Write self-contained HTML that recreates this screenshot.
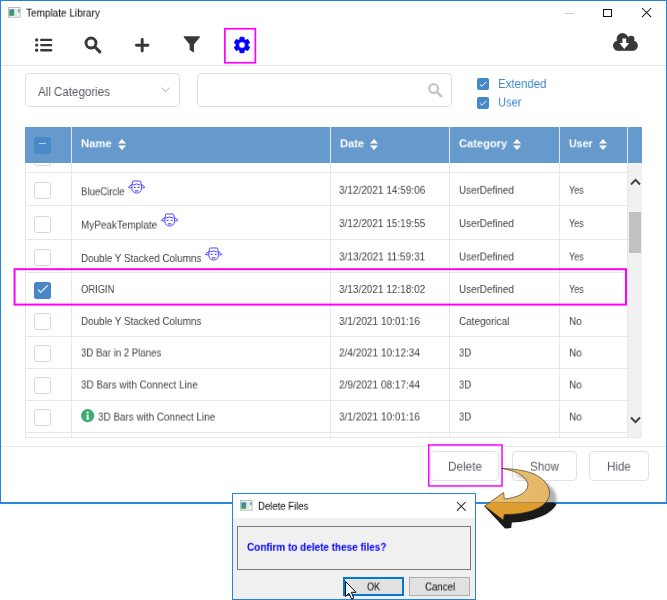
<!DOCTYPE html>
<html>
<head>
<meta charset="utf-8">
<title>Template Library</title>
<style>
html,body{margin:0;padding:0;}
body{width:667px;height:600px;background:#fff;position:relative;overflow:hidden;font-family:"Liberation Sans",sans-serif;color:#333;}
.abs{position:absolute;}
.t{position:absolute;white-space:nowrap;line-height:1;transform-origin:0 0;will-change:transform;}
.box{position:absolute;border:1px solid #dcdfe6;border-radius:4px;background:#fff;box-sizing:border-box;}
.cb{position:absolute;width:17px;height:17px;border:1px solid #d4d7de;border-radius:2.5px;background:#fff;box-sizing:border-box;}
svg{position:absolute;overflow:visible;}
</style>
</head>
<body>

<div class="abs" style="left:0;top:0;width:665px;height:501px;border:1px solid #2485d8;border-bottom:2px solid #2c89d9;background:#fff"></div>
<svg style="left:7.8px;top:7.1px" width="12.4" height="10.6" viewBox="0 0 12.4 10.6">
<defs><linearGradient id="ig1" x1="0" y1="0" x2="0.3" y2="1"><stop offset="0" stop-color="#4b85cc"/><stop offset="0.45" stop-color="#3a8f8c"/><stop offset="1" stop-color="#3fa45c"/></linearGradient></defs>
<rect x="0.5" y="0.5" width="11.6" height="9.7" fill="#fafafa" stroke="#bcbcbc" stroke-width="1"/>
<rect x="1.3" y="2.2" width="5" height="6.7" fill="url(#ig1)"/>
<rect x="6.7" y="2.2" width="2.5" height="6.7" fill="#e3e3e3"/>
<rect x="10" y="2.2" width="1.6" height="1.8" fill="#5b8fd4"/><rect x="10" y="4" width="1.6" height="1.700" fill="#77c477"/>
</svg>
<div class="t" style="left:26.1px;top:7px;font-size:10.6px;color:#000;font-weight:normal;transform:translateY(0.6px) scaleX(0.9431);">Template Library</div>
<div class="abs" style="left:565px;top:12.6px;width:8.8px;height:1px;background:#cdcdcd"></div>
<div class="abs" style="left:603.3px;top:8.6px;width:6.6px;height:6.6px;border:1px solid #111"></div>
<svg style="left:642px;top:8.3px" width="9.2" height="9.2" viewBox="0 0 10 10"><path d="M0 0L10 10M10 0L0 10" stroke="#111" stroke-width="1.1" fill="none"/></svg>
<svg style="left:34.5px;top:38px" width="18" height="14" viewBox="0 0 18 14">
<g fill="#383838"><circle cx="1.65" cy="1.9" r="1.65"/><circle cx="1.65" cy="7.1" r="1.65"/><circle cx="1.65" cy="12.2" r="1.65"/>
<rect x="5.1" y="0.7" width="12.2" height="2.4" rx="1.2"/><rect x="5.1" y="5.9" width="12.2" height="2.4" rx="1.2"/><rect x="5.1" y="11" width="12.2" height="2.4" rx="1.2"/></g></svg>
<svg style="left:84px;top:36px" width="18" height="18" viewBox="0 0 18 18">
<circle cx="7" cy="7" r="5" fill="none" stroke="#383838" stroke-width="2.9"/><path d="M11 11L15.8 15.8" stroke="#383838" stroke-width="3.1" stroke-linecap="round"/></svg>
<svg style="left:134.9px;top:38.4px" width="14.4" height="14.4" viewBox="0 0 16 16">
<path d="M8 1.6V14.4M1.600 8H14.4" stroke="#383838" stroke-width="3.2" stroke-linecap="round"/></svg>
<svg style="left:182.8px;top:36.3px" width="17.6" height="17.2" viewBox="0 0 18 17.2">
<path d="M1.2 0H16.8Q17.8 0 17.2 1.2L11.2 8.6V17L6.800 13.800V8.600L0.800 1.200Q0.2 0 1.2 0Z" fill="#383838"/></svg>
<svg style="left:241.6px;top:44.9px" width="1" height="1" viewBox="0 0 1 1">
<path d="M2.34 -5.52L2.03 -7.84L-2.03 -7.84L-2.34 -5.52L-3.61 -4.79L-5.78 -5.68L-7.81 -2.16L-5.96 -0.73L-5.96 0.73L-7.81 2.16L-5.78 5.68L-3.61 4.79L-2.34 5.52L-2.03 7.84L2.03 7.84L2.34 5.52L3.61 4.79L5.78 5.68L7.81 2.16L5.96 0.73L5.96 -0.73L7.81 -2.16L5.78 -5.68L3.61 -4.79ZM3.25 0A3.25 3.25 0 1 0 -3.25 0A3.25 3.25 0 1 0 3.25 0Z" fill="#0000ff" fill-rule="evenodd" stroke="#0000ff" stroke-width="0.7" stroke-linejoin="round"/></svg>
<svg style="left:613.1px;top:33px" width="24.9" height="17.8" viewBox="0 0 24.9 17.8">
<g fill="#383838"><circle cx="9.5" cy="5.9" r="5.9"/><circle cx="18.1" cy="6.1" r="3.4"/><circle cx="5.2" cy="12.6" r="5.2"/><circle cx="19.7" cy="12.6" r="5.2"/><rect x="5.2" y="7" width="14.5" height="10.8"/></g>
<path fill="#fff" d="M9.4 5.5H13.2V10H16.3L11.3 15.9L6.4 10H9.4Z"/></svg>
<div class="abs" style="left:1px;top:65px;width:665px;height:1px;background:#e6e6e6"></div>
<div class="box" style="left:24.9px;top:73px;width:154.8px;height:33.6px"></div>
<div class="t" style="left:38.3px;top:86px;font-size:12.7px;color:#5a5c60;font-weight:normal;transform:translateY(0px) scaleX(0.9107);">All Categories</div>
<svg style="left:160.7px;top:87.2px" width="9" height="6" viewBox="0 0 9 6"><path d="M0.5 0.7L4.5 4.9L8.5 0.7" stroke="#c0c4cc" stroke-width="1.1" fill="none"/></svg>
<div class="box" style="left:197px;top:73px;width:255px;height:33.6px"></div>
<svg style="left:426.5px;top:82.3px" width="16" height="16" viewBox="0 0 16 16">
<circle cx="6.6" cy="6.6" r="4.4" fill="none" stroke="#c3c6cc" stroke-width="2.3"/><path d="M10 10L14.2 14.2" stroke="#c3c6cc" stroke-width="2.7" stroke-linecap="round"/></svg>
<div class="abs" style="left:477.3px;top:78px;width:12px;height:12px;background:#4587c9;border-radius:2px"></div>
<svg style="left:477.3px;top:78px" width="12" height="12" viewBox="0 0 12 12"><path d="M2.8 6.2L5 8.3L9.3 3.8" stroke="#fff" stroke-width="1" fill="none"/></svg>
<div class="abs" style="left:477.3px;top:96.5px;width:12px;height:12px;background:#4587c9;border-radius:2px"></div>
<svg style="left:477.3px;top:96.5px" width="12" height="12" viewBox="0 0 12 12"><path d="M2.8 6.2L5 8.3L9.3 3.8" stroke="#fff" stroke-width="1" fill="none"/></svg>
<div class="t" style="left:498px;top:78px;font-size:12.7px;color:#3f87c9;font-weight:normal;transform:translateY(0px) scaleX(0.9038);">Extended</div>
<div class="t" style="left:498px;top:96px;font-size:12.7px;color:#3f87c9;font-weight:normal;transform:translateY(0.5px) scaleX(0.8764);">User</div>
<div class="abs" style="left:25px;top:127px;width:617px;height:36px;background:#6699cc"></div>
<div class="abs" style="left:71px;top:127px;width:1px;height:36px;background:#dfe9f4"></div>
<div class="abs" style="left:330px;top:127px;width:1px;height:36px;background:#dfe9f4"></div>
<div class="abs" style="left:449px;top:127px;width:1px;height:36px;background:#dfe9f4"></div>
<div class="abs" style="left:559px;top:127px;width:1px;height:36px;background:#dfe9f4"></div>
<div class="abs" style="left:627px;top:127px;width:1px;height:36px;background:#dfe9f4"></div>
<div class="abs" style="left:34px;top:137px;width:17px;height:17px;background:#4a88c7;border-radius:2.5px"></div>
<div class="abs" style="left:39px;top:142.5px;width:7px;height:1.6px;background:#b4cfea"></div>
<div class="t" style="left:81px;top:138px;font-size:11.5px;color:#fff;font-weight:bold;transform:translateY(0.3px) scaleX(0.975);">Name</div>
<svg style="left:117.8px;top:139px" width="8" height="11" viewBox="0 0 8 11"><path d="M4 0L8 4.6H0Z M4 11L8 6.4H0Z" fill="#fff"/></svg>
<div class="t" style="left:340px;top:138px;font-size:11.5px;color:#fff;font-weight:bold;transform:translateY(0.3px) scaleX(0.965);">Date</div>
<svg style="left:369.8px;top:139px" width="8" height="11" viewBox="0 0 8 11"><path d="M4 0L8 4.6H0Z M4 11L8 6.4H0Z" fill="#fff"/></svg>
<div class="t" style="left:458.5px;top:138px;font-size:11.5px;color:#fff;font-weight:bold;transform:translateY(0.3px) scaleX(0.965);">Category</div>
<svg style="left:512.7px;top:139px" width="8" height="11" viewBox="0 0 8 11"><path d="M4 0L8 4.6H0Z M4 11L8 6.4H0Z" fill="#fff"/></svg>
<div class="t" style="left:569px;top:138px;font-size:11.5px;color:#fff;font-weight:bold;transform:translateY(0.3px) scaleX(0.92);">User</div>
<svg style="left:598.5px;top:139px" width="8" height="11" viewBox="0 0 8 11"><path d="M4 0L8 4.6H0Z M4 11L8 6.4H0Z" fill="#fff"/></svg>
<div class="abs" style="left:25px;top:163px;width:1px;height:274px;background:#e7e7e7"></div>
<div class="abs" style="left:71px;top:163px;width:1px;height:274px;background:#e7e7e7"></div>
<div class="abs" style="left:330px;top:163px;width:1px;height:274px;background:#e7e7e7"></div>
<div class="abs" style="left:449px;top:163px;width:1px;height:274px;background:#e7e7e7"></div>
<div class="abs" style="left:559px;top:163px;width:1px;height:274px;background:#e7e7e7"></div>
<div class="abs" style="left:627px;top:163px;width:1px;height:274px;background:#e7e7e7"></div>
<div class="abs" style="left:25px;top:172px;width:603px;height:1px;background:#e7e7e7"></div>
<div class="abs" style="left:25px;top:205.3px;width:603px;height:1px;background:#e7e7e7"></div>
<div class="abs" style="left:25px;top:238.7px;width:603px;height:1px;background:#e7e7e7"></div>
<div class="abs" style="left:25px;top:272px;width:603px;height:1px;background:#e7e7e7"></div>
<div class="abs" style="left:25px;top:304px;width:603px;height:1px;background:#e7e7e7"></div>
<div class="abs" style="left:25px;top:336px;width:603px;height:1px;background:#e7e7e7"></div>
<div class="abs" style="left:25px;top:368px;width:603px;height:1px;background:#e7e7e7"></div>
<div class="abs" style="left:25px;top:400px;width:603px;height:1px;background:#e7e7e7"></div>
<div class="abs" style="left:25px;top:432px;width:603px;height:1px;background:#e7e7e7"></div>
<div class="abs" style="left:25px;top:437px;width:617px;height:1px;background:#e7e7e7"></div>
<div class="abs" style="left:34px;top:163px;width:17px;height:3px;border:1px solid #d4d7de;border-top:none;border-radius:0 0 2.5px 2.5px;box-sizing:border-box"></div>
<div class="abs" style="left:628px;top:163px;width:14px;height:274px;background:#f1f1f1"></div>
<div class="abs" style="left:629.2px;top:212.3px;width:12.3px;height:41px;background:#c1c1c1"></div>
<svg style="left:630px;top:178px" width="11" height="8" viewBox="0 0 11 8"><path d="M1 6.5L5.5 1.8L10 6.5" stroke="#3e3e3e" stroke-width="1.9" fill="none"/></svg>
<svg style="left:630px;top:415.6px" width="11" height="8" viewBox="0 0 11 8"><path d="M1 1.5L5.5 6.2L10 1.5" stroke="#3e3e3e" stroke-width="1.9" fill="none"/></svg>
<div class="t" style="left:80.9px;top:186px;font-size:11.2px;color:#404040;font-weight:normal;transform:translateY(0.3px) scaleX(0.8542);">BlueCircle</div>
<div class="t" style="left:339.4px;top:184px;font-size:11.2px;color:#404040;font-weight:normal;transform:translateY(0.8px) scaleX(0.894);">3/12/2021 14:59:06</div>
<div class="t" style="left:458.5px;top:184px;font-size:11.2px;color:#404040;font-weight:normal;transform:translateY(0.8px) scaleX(0.8819);">UserDefined</div>
<div class="t" style="left:568.8px;top:184px;font-size:11.2px;color:#404040;font-weight:normal;transform:translateY(0.8px) scaleX(0.7991);">Yes</div>
<div class="cb" style="left:34px;top:182px"></div>
<svg style="left:127.6px;top:179.5px" width="17" height="15" viewBox="0 0 17 15" fill="none" stroke="#4a4aff" stroke-width="1" stroke-linecap="round" stroke-linejoin="round">
<path d="M4 4.7L4.6 1.6Q4.7 1 5.3 1H12Q12.6 1 12.7 1.6L13.3 4.7"/>
<path d="M5.2 4.9Q8.65 2.8 12.1 4.9"/>
<path d="M4 4.6Q1 5.6 0.6 7.6Q1.7 8.3 3.7 7.7"/>
<path d="M13.3 4.6Q16.3 5.6 16.7 7.6Q15.6 8.3 13.6 7.7"/>
<path d="M3.9 5V8.6Q4 12.6 8.65 13.1Q13.3 12.6 13.4 8.6V5"/>
<path d="M6.2 7.3h1M10.1 7.3h1M7.3 10.9h2.7" stroke-width="1.2"/>
</svg>
<div class="t" style="left:80.9px;top:219px;font-size:11.2px;color:#404040;font-weight:normal;transform:translateY(0.6px) scaleX(0.8882);">MyPeakTemplate</div>
<div class="t" style="left:339.4px;top:218px;font-size:11.2px;color:#404040;font-weight:normal;transform:translateY(0.1px) scaleX(0.894);">3/12/2021 15:19:55</div>
<div class="t" style="left:458.5px;top:218px;font-size:11.2px;color:#404040;font-weight:normal;transform:translateY(0.1px) scaleX(0.8819);">UserDefined</div>
<div class="t" style="left:568.8px;top:218px;font-size:11.2px;color:#404040;font-weight:normal;transform:translateY(0.1px) scaleX(0.7991);">Yes</div>
<div class="cb" style="left:34px;top:215.5px"></div>
<svg style="left:160.8px;top:212.8px" width="17" height="15" viewBox="0 0 17 15" fill="none" stroke="#4a4aff" stroke-width="1" stroke-linecap="round" stroke-linejoin="round">
<path d="M4 4.7L4.6 1.6Q4.7 1 5.3 1H12Q12.6 1 12.7 1.6L13.3 4.7"/>
<path d="M5.2 4.9Q8.65 2.8 12.1 4.9"/>
<path d="M4 4.6Q1 5.6 0.6 7.6Q1.7 8.3 3.7 7.7"/>
<path d="M13.3 4.6Q16.3 5.6 16.7 7.6Q15.6 8.3 13.6 7.7"/>
<path d="M3.9 5V8.6Q4 12.6 8.65 13.1Q13.3 12.6 13.4 8.6V5"/>
<path d="M6.2 7.3h1M10.1 7.3h1M7.3 10.9h2.7" stroke-width="1.2"/>
</svg>
<div class="t" style="left:80.9px;top:253px;font-size:11.2px;color:#404040;font-weight:normal;transform:translateY(0px) scaleX(0.8824);">Double Y Stacked Columns</div>
<div class="t" style="left:339.4px;top:251px;font-size:11.2px;color:#404040;font-weight:normal;transform:translateY(0.4px) scaleX(0.9017);">3/13/2021 11:59:31</div>
<div class="t" style="left:458.5px;top:251px;font-size:11.2px;color:#404040;font-weight:normal;transform:translateY(0.4px) scaleX(0.8819);">UserDefined</div>
<div class="t" style="left:568.8px;top:251px;font-size:11.2px;color:#404040;font-weight:normal;transform:translateY(0.4px) scaleX(0.7991);">Yes</div>
<div class="cb" style="left:34px;top:249px"></div>
<svg style="left:205.1px;top:246.5px" width="17" height="15" viewBox="0 0 17 15" fill="none" stroke="#4a4aff" stroke-width="1" stroke-linecap="round" stroke-linejoin="round">
<path d="M4 4.7L4.6 1.6Q4.7 1 5.3 1H12Q12.6 1 12.7 1.6L13.3 4.7"/>
<path d="M5.2 4.9Q8.65 2.8 12.1 4.9"/>
<path d="M4 4.6Q1 5.6 0.6 7.6Q1.7 8.3 3.7 7.7"/>
<path d="M13.3 4.6Q16.3 5.6 16.7 7.6Q15.6 8.3 13.6 7.7"/>
<path d="M3.9 5V8.6Q4 12.6 8.65 13.1Q13.3 12.6 13.4 8.6V5"/>
<path d="M6.2 7.3h1M10.1 7.3h1M7.3 10.9h2.7" stroke-width="1.2"/>
</svg>
<div class="t" style="left:80.9px;top:283px;font-size:11.2px;color:#404040;font-weight:normal;transform:translateY(0.9px) scaleX(0.8362);">ORIGIN</div>
<div class="t" style="left:339.4px;top:283px;font-size:11.2px;color:#404040;font-weight:normal;transform:translateY(0.9px) scaleX(0.894);">3/13/2021 12:18:02</div>
<div class="t" style="left:458.5px;top:283px;font-size:11.2px;color:#404040;font-weight:normal;transform:translateY(0.9px) scaleX(0.8819);">UserDefined</div>
<div class="t" style="left:568.8px;top:283px;font-size:11.2px;color:#404040;font-weight:normal;transform:translateY(0.9px) scaleX(0.7991);">Yes</div>
<div class="abs" style="left:34px;top:282px;width:17px;height:17px;background:#4a86c5;border-radius:2.5px"></div>
<svg style="left:34px;top:282px" width="17" height="17" viewBox="0 0 17 17"><path d="M4 7.700L6.600 10.500L13.600 3.500" stroke="#fff" stroke-opacity="0.92" stroke-width="1.15" fill="none"/></svg>
<div class="t" style="left:80.9px;top:315px;font-size:11.2px;color:#404040;font-weight:normal;transform:translateY(0.9px) scaleX(0.8824);">Double Y Stacked Columns</div>
<div class="t" style="left:339.4px;top:315px;font-size:11.2px;color:#404040;font-weight:normal;transform:translateY(0.9px) scaleX(0.897);">3/1/2021 10:01:16</div>
<div class="t" style="left:458.5px;top:315px;font-size:11.2px;color:#404040;font-weight:normal;transform:translateY(0.9px) scaleX(0.8897);">Categorical</div>
<div class="t" style="left:568.8px;top:315px;font-size:11.2px;color:#404040;font-weight:normal;transform:translateY(0.9px) scaleX(0.894);">No</div>
<div class="cb" style="left:34px;top:313px"></div>
<div class="t" style="left:80.9px;top:347px;font-size:11.2px;color:#404040;font-weight:normal;transform:translateY(0.5px) scaleX(0.8599);">3D Bar in 2 Planes</div>
<div class="t" style="left:339.4px;top:347px;font-size:11.2px;color:#404040;font-weight:normal;transform:translateY(0.5px) scaleX(0.897);">2/4/2021 10:12:34</div>
<div class="t" style="left:458.5px;top:347px;font-size:11.2px;color:#404040;font-weight:normal;transform:translateY(0.5px) scaleX(0.8521);">3D</div>
<div class="t" style="left:568.8px;top:347px;font-size:11.2px;color:#404040;font-weight:normal;transform:translateY(0.5px) scaleX(0.894);">No</div>
<div class="cb" style="left:34px;top:345px"></div>
<div class="t" style="left:80.9px;top:379px;font-size:11.2px;color:#404040;font-weight:normal;transform:translateY(0.5px) scaleX(0.8816);">3D Bars with Connect Line</div>
<div class="t" style="left:339.4px;top:379px;font-size:11.2px;color:#404040;font-weight:normal;transform:translateY(0.5px) scaleX(0.897);">2/9/2021 08:17:44</div>
<div class="t" style="left:458.5px;top:379px;font-size:11.2px;color:#404040;font-weight:normal;transform:translateY(0.5px) scaleX(0.8521);">3D</div>
<div class="t" style="left:568.8px;top:379px;font-size:11.2px;color:#404040;font-weight:normal;transform:translateY(0.5px) scaleX(0.894);">No</div>
<div class="cb" style="left:34px;top:377px"></div>
<div class="t" style="left:98.1px;top:411px;font-size:11.2px;color:#404040;font-weight:normal;transform:translateY(0.6px) scaleX(0.8846);">3D Bars with Connect Line</div>
<div class="t" style="left:339.4px;top:411px;font-size:11.2px;color:#404040;font-weight:normal;transform:translateY(0.5px) scaleX(0.897);">3/1/2021 10:01:16</div>
<div class="t" style="left:458.5px;top:411px;font-size:11.2px;color:#404040;font-weight:normal;transform:translateY(0.5px) scaleX(0.8521);">3D</div>
<div class="t" style="left:568.8px;top:411px;font-size:11.2px;color:#404040;font-weight:normal;transform:translateY(0.5px) scaleX(0.894);">No</div>
<div class="cb" style="left:34px;top:408.5px"></div>
<svg style="left:80.8px;top:408.9px" width="13.3" height="13.3" viewBox="0 0 13 13"><circle cx="6.5" cy="6.5" r="6.5" fill="#3eab72"/>
<circle cx="6.5" cy="3.6" r="1.05" fill="#fff"/><path d="M5.2 5.700H7.400V9.300H8.100V10.300H5V9.300H5.700V6.700H5.200Z" fill="#fff"/></svg>
<div class="abs" style="left:1px;top:445.5px;width:665px;height:1px;background:#ebebeb"></div>
<div class="box" style="left:429.5px;top:451px;width:69.5px;height:30.3px;border-color:#dfe2e8"></div>
<div class="t" style="left:447.5px;top:461px;font-size:11.9px;color:#5a5c60;font-weight:normal;transform:translateY(0.7px) scaleX(0.9855);">Delete</div>
<div class="box" style="left:512.2px;top:451px;width:64.5px;height:30.3px;border-color:#dfe2e8"></div>
<div class="t" style="left:529.8px;top:461px;font-size:11.9px;color:#5a5c60;font-weight:normal;transform:translateY(0.7px) scaleX(0.9709);">Show</div>
<div class="box" style="left:589.3px;top:451px;width:59.7px;height:30.3px;border-color:#dfe2e8"></div>
<div class="t" style="left:607.2px;top:461px;font-size:11.9px;color:#5a5c60;font-weight:normal;transform:translateY(0.7px) scaleX(0.9725);">Hide</div>
<div class="abs" style="left:232px;top:493px;width:241.5px;height:104.8px;border:1.2px solid #2485d8;background:#f0f0f0"></div>
<div class="abs" style="left:233.2px;top:494.2px;width:241.5px;height:24px;background:#fff"></div>
<svg style="left:240.2px;top:499.8px" width="12.4" height="10.6" viewBox="0 0 12.4 10.6">
<defs><linearGradient id="ig2" x1="0" y1="0" x2="0.3" y2="1"><stop offset="0" stop-color="#4b85cc"/><stop offset="0.45" stop-color="#3a8f8c"/><stop offset="1" stop-color="#3fa45c"/></linearGradient></defs>
<rect x="0.5" y="0.5" width="11.6" height="9.7" fill="#fafafa" stroke="#bcbcbc" stroke-width="1"/>
<rect x="1.3" y="2.2" width="5" height="6.7" fill="url(#ig2)"/>
<rect x="6.7" y="2.2" width="2.5" height="6.7" fill="#e3e3e3"/>
<rect x="10" y="2.2" width="1.6" height="1.8" fill="#5b8fd4"/><rect x="10" y="4" width="1.6" height="1.700" fill="#77c477"/>
</svg>
<div class="t" style="left:258px;top:500px;font-size:10.6px;color:#000;font-weight:normal;transform:translateY(0.8px) scaleX(0.8988);">Delete Files</div>
<svg style="left:457.2px;top:501.6px" width="8.6" height="8.6" viewBox="0 0 9 9"><path d="M0 0L9 9M9 0L0 9" stroke="#222" stroke-width="1.1" fill="none"/></svg>
<div class="abs" style="left:237px;top:526px;width:233.5px;height:43.5px;border:1px solid #7a7a7a;box-sizing:border-box"></div>
<div class="t" style="left:246.8px;top:541px;font-size:10.8px;color:#0000ff;font-weight:bold;transform:translateY(0.8px) scaleX(0.9225);">Confirm to delete these files?</div>
<div class="abs" style="left:343.2px;top:577.2px;width:60.4px;height:19.3px;border:2px solid #0078d7;background:#e1e1e1;box-sizing:border-box"></div>
<div class="abs" style="left:409.2px;top:577.2px;width:60.8px;height:19.3px;border:1px solid #adadad;background:#e1e1e1;box-sizing:border-box"></div>
<div class="t" style="left:367px;top:581px;font-size:10.8px;color:#000;font-weight:normal;transform:translateY(0.5px) scaleX(0.8331);">OK</div>
<div class="t" style="left:424.5px;top:581px;font-size:10.8px;color:#000;font-weight:normal;transform:translateY(0.5px) scaleX(0.8953);">Cancel</div>
<svg style="left:345px;top:581px" width="12" height="19" viewBox="0 0 12 19"><path d="M0.5 0.5V15.5L4 12.2L6.6 18L8.8 17L6.3 11.3H11Z" fill="#fff" stroke="#000" stroke-width="1"/></svg>
<svg style="left:0;top:0" width="667" height="600" viewBox="0 0 667 600">
<defs><clipPath id="cu"><rect x="0" y="0" width="667" height="502.5"/></clipPath><clipPath id="cl"><rect x="0" y="502.5" width="667" height="100"/></clipPath>
<filter id="bl" x="-20%" y="-20%" width="140%" height="140%"><feGaussianBlur stdDeviation="1.6"/></filter></defs>
<rect x="14.55" y="269.2" width="611.45" height="35.4" fill="none" stroke="#ff00ff" stroke-width="2"/>
<rect x="224.85" y="28.75" width="30.5" height="34" fill="none" stroke="#ff00ff" stroke-width="1.7"/>
<rect x="428.75" y="444.95" width="73.3" height="41" fill="none" stroke="#ff00ff" stroke-width="1.5"/>
<path d="M501.6 468.5C508 468.5 520 469.5 530 472.5C541 476 549.5 484 549.5 493C549.5 506 532 514.5 504.3 514.5L503.2 520L484.7 506L503.6 492.5L504.3 499C516 498 527.5 493.5 527.9 485C528.2 478 517 470.5 501.6 468.5Z" transform="translate(7,6)" fill="#000" opacity="0.3" filter="url(#bl)"/>
<path d="M484.3 506.2L505 528.6L511.2 528.1L511.8 522.6C522 522.2 535 519.6 545.5 514.5C551 511.2 555.2 507.2 556.3 504L554 502.5L500 500Z" fill="#1a1a1a" clip-path="url(#cl)"/>
<path d="M501.6 468.5C508 468.5 520 469.5 530 472.5C541 476 549.5 484 549.5 493C549.5 506 532 514.5 504.3 514.5L503.2 520L484.7 506L503.6 492.5L504.3 499C516 498 527.5 493.5 527.9 485C528.2 478 517 470.5 501.6 468.5Z" fill="#e7b766" fill-opacity="0.96" clip-path="url(#cu)"/>
<path d="M501.6 468.5C508 468.5 520 469.5 530 472.5C541 476 549.5 484 549.5 493C549.5 506 532 514.5 504.3 514.5L503.2 520L484.7 506L503.6 492.5L504.3 499C516 498 527.5 493.5 527.9 485C528.2 478 517 470.5 501.6 468.5Z" fill="#df9d2f" clip-path="url(#cl)"/>
<path d="M501.6 468.5C508 468.5 520 469.5 530 472.5C541 476 549.5 484 549.5 493C549.5 506 532 514.5 504.3 514.5L503.2 520L484.7 506L503.6 492.5L504.3 499C516 498 527.5 493.5 527.9 485C528.2 478 517 470.5 501.6 468.5Z" fill="none" stroke="#4a3410" stroke-width="0.8" stroke-opacity="0.85"/>
</svg>
</body></html>
